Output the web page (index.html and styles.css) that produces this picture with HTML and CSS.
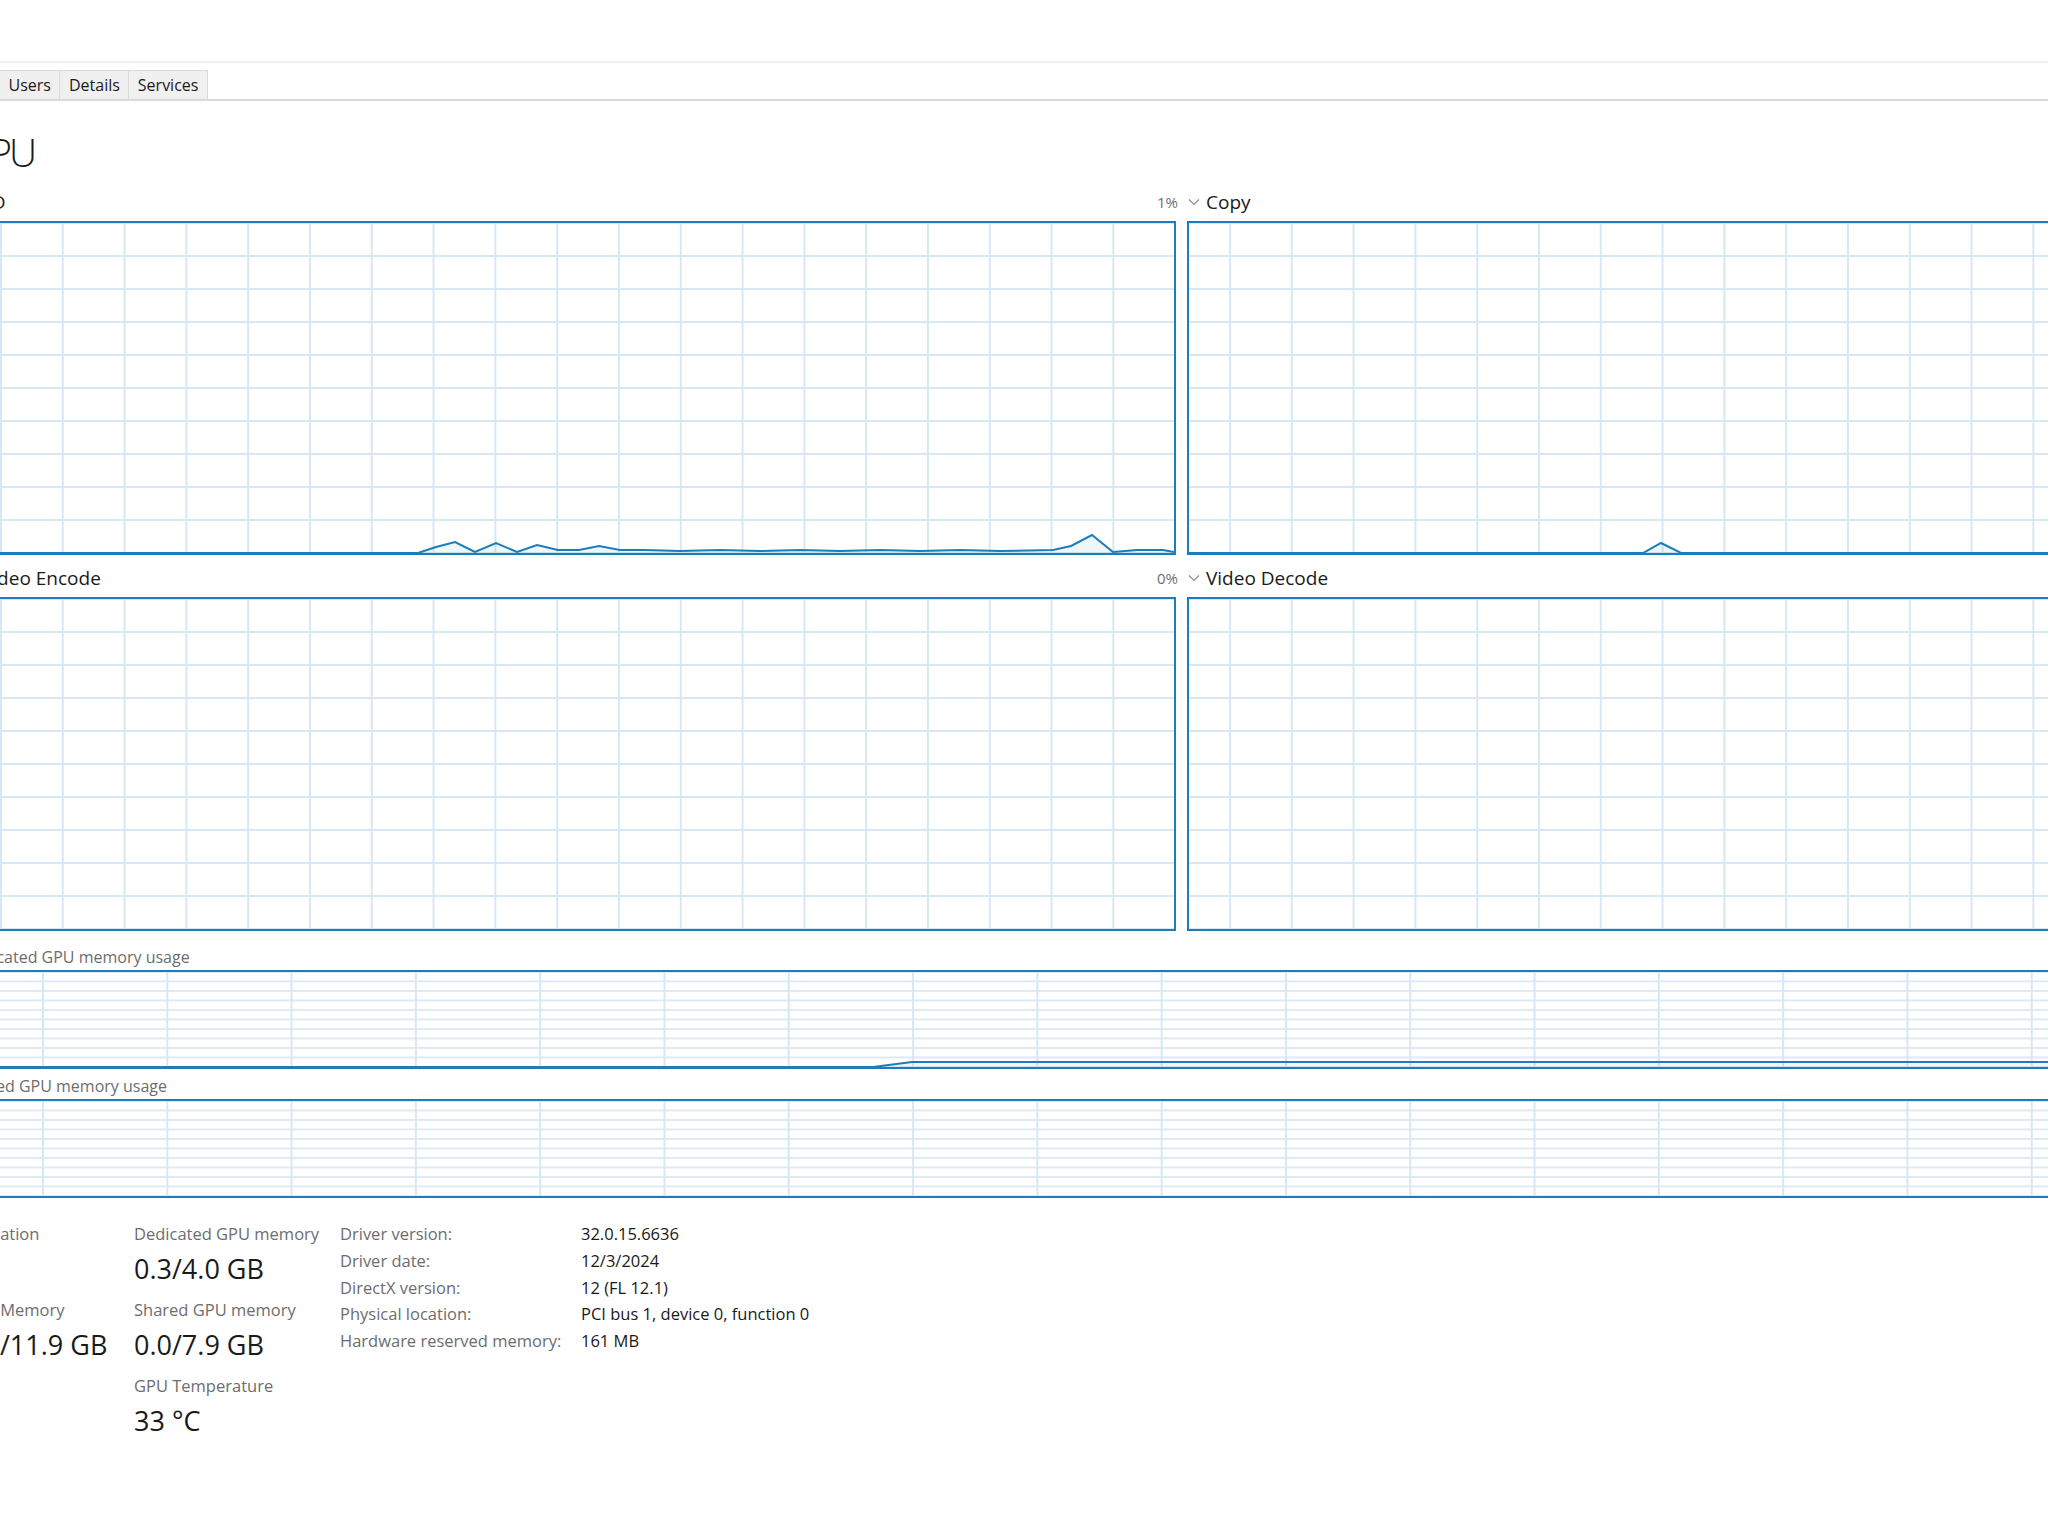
FILE: index.html
```html
<!DOCTYPE html>
<html lang="en">

<head>
  <meta charset="UTF-8">
  <title>Task Manager - GPU</title>
  <link rel="stylesheet" href="styles.css">
</head>

<body>
  <div class="topbar"></div>

  <ul class="tabs">
    <li>Users</li>
    <li>Details</li>
    <li>Services</li>
  </ul>

  <div class="perf">
    <h1 class="title">GPU</h1>

    <div class="pair head">
      <div class="gh">
        <span class="gh-name">
          <svg class="chev" width="12" height="8" viewBox="0 0 12 8"><path d="M1 1.5L6 6.5L11 1.5"/></svg>
          3D
        </span>
        <span class="gh-pct">1%</span>
      </div>
      <div class="gh">
        <span class="gh-name">
          <svg class="chev" width="12" height="8" viewBox="0 0 12 8"><path d="M1 1.5L6 6.5L11 1.5"/></svg>
          Copy
        </span>
        <span class="gh-pct">0%</span>
      </div>
    </div>

    <div class="pair">
      <div class="graph big grid-a">
        <svg class="plot" viewBox="0 0 1210 330" preserveAspectRatio="none">
          <polygon class="area" points="0,330 454,330 472,324 491,319 511,329 532,320 553,329 573,322 594,327 615,327 635,323 656,327 681,327 716,328 756,327 796,328 836,327 876,328 916,327 956,328 996,327 1036,328 1089,327 1107,323 1128,312 1149,329 1173,327 1199,327 1210,329 1210,330"/>
          <polyline class="line" points="0,330 454,330 472,324 491,319 511,329 532,320 553,329 573,322 594,327 615,327 635,323 656,327 681,327 716,328 756,327 796,328 836,327 876,328 916,327 956,328 996,327 1036,328 1089,327 1107,323 1128,312 1149,329 1173,327 1199,327 1210,329"/>
        </svg>
      </div>
      <div class="graph big grid-b">
        <svg class="plot" viewBox="0 0 1210 330" preserveAspectRatio="none">
          <polygon class="area" points="454,330 472,320 492,330"/>
          <polyline class="line" points="0,330 454,330 472,320 492,330 1210,330"/>
        </svg>
      </div>
    </div>

    <div class="pair head">
      <div class="gh">
        <span class="gh-name">
          <svg class="chev" width="12" height="8" viewBox="0 0 12 8"><path d="M1 1.5L6 6.5L11 1.5"/></svg>
          Video Encode
        </span>
        <span class="gh-pct">0%</span>
      </div>
      <div class="gh">
        <span class="gh-name">
          <svg class="chev" width="12" height="8" viewBox="0 0 12 8"><path d="M1 1.5L6 6.5L11 1.5"/></svg>
          Video Decode
        </span>
        <span class="gh-pct">0%</span>
      </div>
    </div>

    <div class="pair">
      <div class="graph big grid-a"></div>
      <div class="graph big grid-b"></div>
    </div>

    <div class="mem-head first">Dedicated GPU memory usage</div>
    <div class="graph mem">
      <svg class="plot" viewBox="0 0 2435 95" preserveAspectRatio="none">
        <polygon class="area" points="909,95 948,90 2435,90 2435,95"/>
        <polyline class="line" points="0,95 909,95 948,90 2435,90"/>
      </svg>
    </div>

    <div class="mem-head">Shared GPU memory usage</div>
    <div class="graph mem"></div>

    <div class="stats">
      <div class="col col-1">
        <div class="lbl">Utilization</div>
        <div class="val">1%</div>
        <div class="lbl">GPU Memory</div>
        <div class="val">0.3/11.9 GB</div>
      </div>
      <div class="col col-2">
        <div class="lbl">Dedicated GPU memory</div>
        <div class="val">0.3/4.0 GB</div>
        <div class="lbl">Shared GPU memory</div>
        <div class="val">0.0/7.9 GB</div>
        <div class="lbl">GPU Temperature</div>
        <div class="val">33 °C</div>
      </div>
      <table class="info">
        <tr><td>Driver version:</td><td>32.0.15.6636</td></tr>
        <tr><td>Driver date:</td><td>12/3/2024</td></tr>
        <tr><td>DirectX version:</td><td>12 (FL 12.1)</td></tr>
        <tr><td>Physical location:</td><td>PCI bus 1, device 0, function 0</td></tr>
        <tr><td>Hardware reserved memory:</td><td>161 MB</td></tr>
      </table>
    </div>
  </div>
</body>

</html>
```

FILE: styles.css
```css
* {
  margin: 0;
  padding: 0;
  box-sizing: border-box;
}

html,
body {
  width: 2048px;
  height: 1536px;
  overflow: hidden;
  background: #fff;
}

body {
  font-family: "Open Sans", "Noto Sans", sans-serif;
  color: #1a1a1a;
}

ul {
  list-style: none;
}

.topbar {
  height: 63px;
  border-bottom: 2px solid #f0f0f0;
}

.tabs {
  display: flex;
  margin-top: 7px;
  margin-left: -1px;
  height: 31px;
  border-bottom: 2px solid #dadada;
}

.tabs li {
  height: 29px;
  padding: 1px 8.5px 0;
  font-size: 16px;
  line-height: 27px;
  background: #f0f0f0;
  border: 1px solid #dadada;
  border-bottom: 0;
  margin-right: -1px;
}

/* performance pane, starts left of the window edge */
.perf {
  width: 2439px;
  margin-left: -38px;
}

.title {
  margin-top: 27px;
  margin-left: 2px;
  font-size: 39px;
  line-height: 48px;
  font-weight: 300;
  letter-spacing: -3px;
}

.pair {
  display: flex;
  justify-content: space-between;
}

.pair.head {
  height: 45px;
  align-items: flex-end;
  padding-bottom: 7px;
}

.pair.head + .pair + .pair.head {
  height: 42px;
}

.gh {
  width: 1214px;
  display: flex;
  align-items: flex-end;
  justify-content: space-between;
  line-height: 24px;
}

.gh-name {
  display: flex;
  align-items: center;
  gap: 6px;
  font-size: 19px;
  padding-left: 1px;
}

.chev path {
  fill: none;
  stroke: #8c8c8c;
  stroke-width: 1.2;
}

.gh-pct {
  font-size: 15px;
  color: #707070;
  margin-right: -2px;
}

.graph {
  border: 2px solid #1d7dbb;
  background-color: #fff;
}

.graph.big {
  width: 1214px;
  height: 334px;
  background-image:
    linear-gradient(90deg, #d6e8f3 2px, transparent 2px),
    linear-gradient(#d6e8f3 2px, transparent 2px);
  background-size: 61.8px 100%, 100% 33px;
}

.grid-a {
  background-position: 36px 0, 0 -1px;
}

.grid-b {
  background-position: 40px 0, 0 -1px;
}

.graph.mem {
  width: 2439px;
  height: 99px;
  background-image:
    linear-gradient(90deg, #d6e8f3 2px, transparent 2px),
    linear-gradient(#dceaf4 1.5px, transparent 1.5px);
  background-size: 124.3px 100%, 100% 9.5px;
  background-position: 78px 0, 0 -1px;
}

.plot {
  display: block;
  width: 100%;
  height: 100%;
}

.plot .line {
  fill: none;
  stroke: #1d7dbb;
  stroke-width: 2;
}

.plot .area {
  fill: rgba(29, 125, 187, 0.07);
  stroke: none;
}

.mem-head {
  height: 30px;
  padding-bottom: 3px;
  display: flex;
  align-items: flex-end;
  font-size: 16px;
  line-height: 20px;
  color: #6d6d6d;
}

.mem-head.first {
  height: 39px;
}

.stats {
  display: flex;
  align-items: flex-start;
  margin-top: 24px;
}

.col-1 {
  width: 172px;
}

.col-2 {
  width: 206px;
}

.lbl {
  font-size: 16.5px;
  line-height: 24px;
  color: #6d6d6d;
}

.val {
  margin: 3px 0 9px;
  font-size: 27px;
  line-height: 40px;
  color: #1a1a1a;
}

.info {
  border-collapse: collapse;
  margin-top: -1px;
  font-size: 16.5px;
}

.info td {
  padding: 0;
  height: 26.75px;
  line-height: 26.75px;
  white-space: nowrap;
}

.info td:first-child {
  width: 241px;
  color: #6d6d6d;
}
```
